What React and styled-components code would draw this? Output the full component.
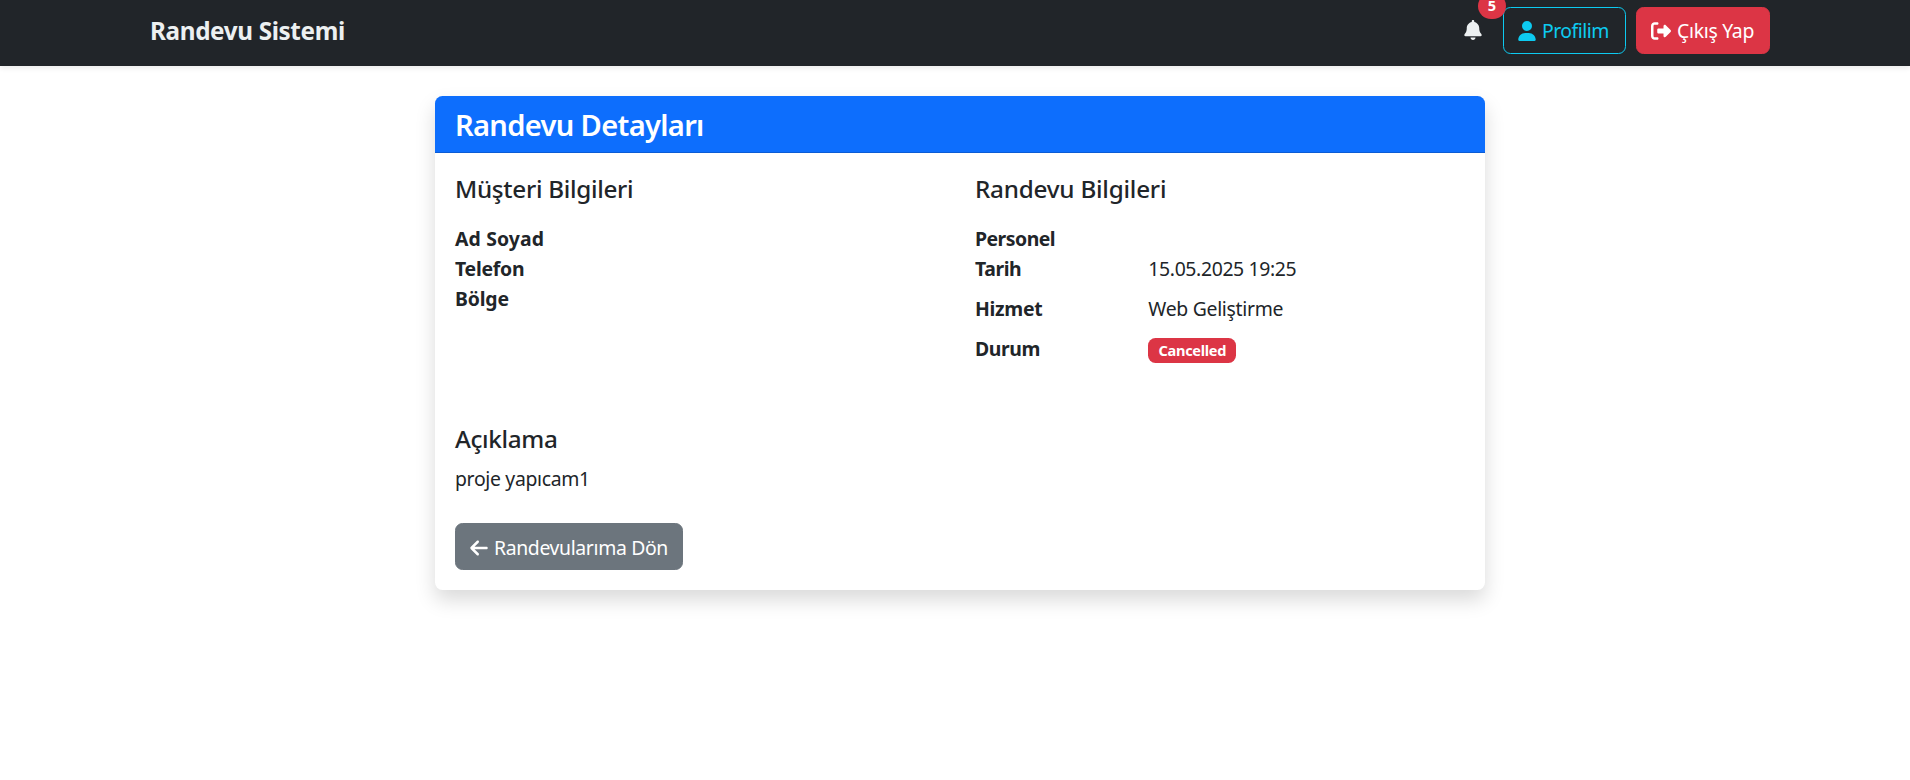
import React from 'react';
import styled, { createGlobalStyle, css } from 'styled-components';
import { FaBell, FaUser, FaRightFromBracket, FaArrowLeft } from 'react-icons/fa6';

const GlobalStyle = createGlobalStyle`
  *, *::before, *::after { box-sizing: border-box; }
  body {
    margin: 0;
    min-height: 100vh;
    background: #fff;
    color: #212529;
    font-family: 'Segoe UI', 'Noto Sans', 'Liberation Sans', sans-serif;
    font-size: 19.4px;
    line-height: 30px;
  }
`;

const tracking = css`
  letter-spacing: ${({ $track = -0.35 }) => $track}px;
`;

const Navbar = styled.header`
  display: flex;
  align-items: center;
  justify-content: space-between;
  height: 66px;
  padding: 7px 140px 12px 150px;
  background: #212529;
  box-shadow: 0 2.5px 5px rgba(0, 0, 0, 0.075);
`;

const Brand = styled.a`
  color: #ecf0f1;
  font-size: 24.25px;
  font-weight: 700;
  line-height: 38px;
  letter-spacing: -0.35px;
`;

const Actions = styled.nav`
  display: flex;
  align-items: center;
  gap: 10px;
`;

const BellLink = styled.a`
  position: relative;
  display: flex;
  margin: 0 11px 1px 0;
  color: #ecf0f1;

  svg {
    width: 18px;
    height: 20px;
  }
`;

const Counter = styled.span`
  position: absolute;
  top: -27px;
  left: 14px;
  width: 28px;
  padding: 5px 0;
  border-radius: 16px;
  background: #dc3545;
  color: #fff;
  font-size: 14.6px;
  font-weight: 700;
  line-height: 15.5px;
  text-align: center;
`;

const variants = {
  info: css`
    color: #0dcaf0;
    border-color: #0dcaf0;
    background: transparent;
  `,
  danger: css`
    color: #fff;
    border-color: #dc3545;
    background: #dc3545;
  `,
  secondary: css`
    color: #fff;
    border-color: #6c757d;
    background: #6c757d;
  `,
};

const Button = styled.button`
  display: inline-flex;
  align-items: center;
  gap: ${({ $gap = 6 }) => $gap}px;
  width: ${({ $width }) => $width}px;
  height: 47px;
  padding: ${({ $drop = 0 }) => $drop}px 0 0 14px;
  border: 1px solid;
  border-radius: 7.5px;
  font: inherit;
  white-space: nowrap;
  ${tracking}
  ${({ $variant }) => variants[$variant]}

  svg {
    flex: none;
    width: ${({ $icon = 18 }) => $icon}px;
    height: 20px;
  }
`;

const Main = styled.main`
  display: flex;
  justify-content: center;
  padding: 30px 0 40px 10px;
`;

const Card = styled.section`
  width: 1050px;
  border-radius: 7.5px;
  background: #fff;
  box-shadow: 0 10px 20px rgba(0, 0, 0, 0.15);
`;

const CardHeader = styled.div`
  padding: 11px 20px 9px;
  border-bottom: 1px solid #0b5cd5;
  border-radius: 7.5px 7.5px 0 0;
  background: #0d6efd;
`;

const CardTitle = styled.h4`
  margin: 0;
  color: #fff;
  font-size: 29.1px;
  font-weight: 600;
  line-height: 36px;
  letter-spacing: -0.68px;
`;

const CardBody = styled.div`
  padding: 21px 20px 20px;
`;

const Columns = styled.div`
  display: grid;
  grid-template-columns: 1fr 1fr;
  column-gap: 30px;
  margin-bottom: 30px;
`;

const SectionTitle = styled.h5`
  margin: 0 0 ${({ $gap = 20 }) => $gap}px;
  font-size: 24.25px;
  font-weight: 500;
  line-height: 30px;
  ${tracking}
`;

const Details = styled.dl`
  margin: 0 0 20px;
`;

const Row = styled.div`
  display: grid;
  grid-template-columns: 173.33px 1fr;
`;

const Term = styled.dt`
  font-weight: 700;
  ${tracking}
`;

const Value = styled.dd`
  margin: 0 0 ${({ $empty }) => ($empty ? 0 : 10)}px;
  ${tracking}
`;

const StatusBadge = styled.span`
  display: block;
  width: 88px;
  height: 25px;
  margin: 4px 0 1px;
  border-radius: 7.5px;
  background: #dc3545;
  color: #fff;
  font-size: 14.55px;
  font-weight: 700;
  line-height: 25px;
  letter-spacing: -0.3px;
  text-align: center;
`;

const Description = styled.p`
  margin: 0 0 29px;
  ${tracking}
`;

const customer = [
  { label: 'Ad Soyad', track: 0.14 },
  { label: 'Telefon', track: -0.25 },
  { label: 'Bölge', track: -0.15 },
];

const appointment = [
  { label: 'Personel', track: -0.5 },
  { label: 'Tarih', track: -0.4, value: '15.05.2025 19:25', valueTrack: -0.36 },
  { label: 'Hizmet', track: -0.3, value: 'Web Geliştirme', valueTrack: -0.3 },
  { label: 'Durum', track: -0.4, value: <StatusBadge>Cancelled</StatusBadge> },
];

function DetailList({ items }) {
  return (
    <Details>
      {items.map(({ label, track, value, valueTrack }) => (
        <Row key={label}>
          <Term $track={track}>{label}</Term>
          <Value $empty={!value} $track={valueTrack}>{value}</Value>
        </Row>
      ))}
    </Details>
  );
}

export default function App() {
  return (
    <>
      <GlobalStyle />
      <Navbar>
        <Brand>Randevu Sistemi</Brand>
        <Actions>
          <BellLink>
            <FaBell />
            <Counter>5</Counter>
          </BellLink>
          <Button $variant="info" $width={123} $track={-0.5}>
            <FaUser />
            Profilim
          </Button>
          <Button $variant="danger" $width={134} $icon={20} $track={-0.3}>
            <FaRightFromBracket />
            Çıkış Yap
          </Button>
        </Actions>
      </Navbar>
      <Main>
        <Card>
          <CardHeader>
            <CardTitle>Randevu Detayları</CardTitle>
          </CardHeader>
          <CardBody>
            <Columns>
              <div>
                <SectionTitle $track={-0.3}>Müşteri Bilgileri</SectionTitle>
                <DetailList items={customer} />
              </div>
              <div>
                <SectionTitle $track={-0.22}>Randevu Bilgileri</SectionTitle>
                <DetailList items={appointment} />
              </div>
            </Columns>
            <SectionTitle $gap={10} $track={-0.34}>Açıklama</SectionTitle>
            <Description $track={-0.32}>proje yapıcam1</Description>
            <Button $variant="secondary" $width={228} $drop={2} $track={-0.36}>
              <FaArrowLeft />
              Randevularıma Dön
            </Button>
          </CardBody>
        </Card>
      </Main>
    </>
  );
}
